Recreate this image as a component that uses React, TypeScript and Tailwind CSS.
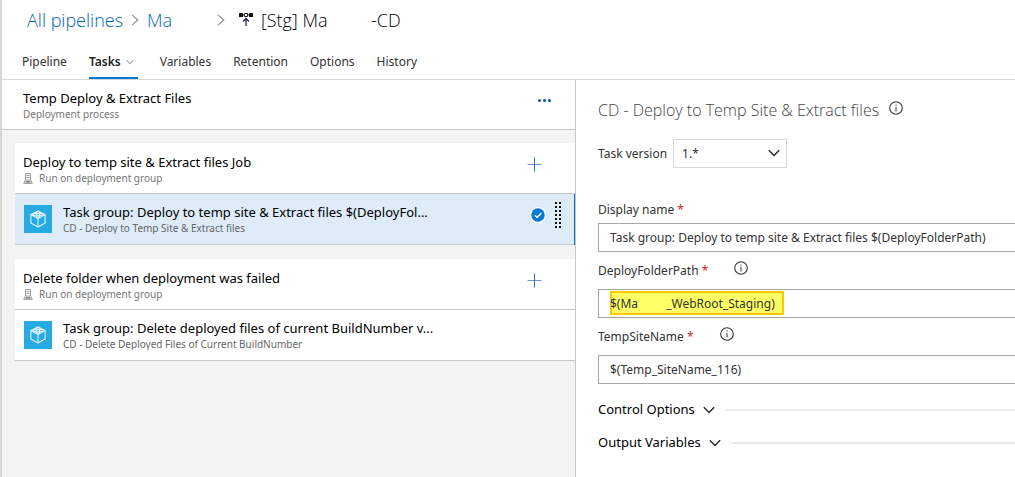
import { useState } from "react";
import type { ReactNode } from "react";

function Chevron({ className }: { className: string }) {
  return (
    <svg viewBox="0 0 12 8" className={className} fill="none" stroke="currentColor" aria-hidden="true">
      <path d="M0.8 1.2 6 6.5 11.2 1.2" strokeWidth="1.3" />
    </svg>
  );
}

function CrumbArrow() {
  return (
    <svg viewBox="0 0 8 12" className="h-3 w-2 shrink-0 text-[#8a8a8a]" fill="none" stroke="currentColor" aria-hidden="true">
      <path d="M1 0.8 6.8 6 1 11.2" strokeWidth="1.1" />
    </svg>
  );
}

function ReleaseIcon() {
  return (
    <svg viewBox="0 0 14 14" className="h-3.5 w-3.5 shrink-0" aria-hidden="true">
      <path d="M0 0h4v4H0zM10 0h4v4h-4z" fill="#111" />
      <path d="M5.500 0.500h3v3h-3z" fill="#fff" stroke="#222" />
      <path d="M4 2h1.500M8.500 2H10" stroke="#222" />
      <path d="M7 13V5.500M4 8.500 7 5.500l3 3" fill="none" stroke="#1b2a44" strokeWidth="1.300" />
    </svg>
  );
}

function InfoButton({ label }: { label: string }) {
  return (
    <button type="button" aria-label={label} className="h-3.5 w-3.5 shrink-0 text-[#333]">
      <svg viewBox="0 0 14 14" className="h-3.5 w-3.5" fill="none" stroke="currentColor" aria-hidden="true">
        <circle cx="7" cy="7" r="6.300" strokeWidth="1.100" />
        <path d="M7 6v4.500" />
        <path d="M7 3.500v1.200" />
      </svg>
    </button>
  );
}

function GroupIcon() {
  return (
    <svg viewBox="0 0 10 11" className="h-[11px] w-2.5 shrink-0" fill="none" stroke="#999" aria-hidden="true">
      <path d="M2.500 0.500h5v6.500h-5z" />
      <path d="M3.500 2.500h3M3.500 4.500h3" />
      <path d="M2 7.500 0.700 10.400h8.600L8 7.500" />
      <path d="M2.500 8.800h5" strokeWidth="1.500" stroke="#777" />
    </svg>
  );
}

function CubeTile() {
  return (
    <span className="flex h-7 w-7 shrink-0 items-center justify-center bg-[#27a9e1]">
      <svg viewBox="0 0 18 20" className="h-[18px] w-4" fill="none" stroke="#e6f6fd" strokeWidth="1.200" strokeLinejoin="round" aria-hidden="true">
        <path d="M9 1 17 5v9.500L9 19 1 14.500V5z" />
        <path d="M1 5l8 4.500L17 5M9 9.500V19" />
        <ellipse cx="9" cy="3" rx="2" ry="1.100" />
        <ellipse cx="5.500" cy="4.900" rx="1.900" ry="1.100" />
        <ellipse cx="12.500" cy="4.900" rx="1.900" ry="1.100" />
        <ellipse cx="9" cy="6.800" rx="1.900" ry="1.100" />
      </svg>
    </span>
  );
}

function JobRow({ title }: { title: string }) {
  return (
    <div className="flex h-[51px] items-center border-b border-[#c8c8c8] bg-white pr-8 pl-2">
      <div className="min-w-0 flex-1">
        <h3 className="truncate text-[13px] leading-5 text-black">{title}</h3>
        <p className="flex items-center gap-1.5 text-[10px] leading-3 text-[#767676]">
          <GroupIcon />
          Run on deployment group
        </p>
      </div>
      <button type="button" aria-label={`Add a task to ${title}`} className="mr-px mb-2 flex h-6 w-4 items-center justify-center text-[#2b6cc4]">
        <svg viewBox="0 0 15 15" className="h-[15px] w-[15px] shrink-0" stroke="currentColor" aria-hidden="true">
          <path d="M7.500 0.500v14" />
          <path d="M0.500 7.500h14" strokeOpacity="0.700" />
        </svg>
      </button>
    </div>
  );
}

function TaskRow({ title, detail, selected = false }: { title: string; detail: string; selected?: boolean }) {
  return (
    <div className={selected ? "border-r border-[#0f6cbd]" : ""}>
      <div
        className={
          selected
            ? "flex h-[51px] items-center border-b border-[#c8c8c8] bg-[#deecf9] pr-3 pl-[9px]"
            : "flex h-[51px] items-center border-b border-[#c8c8c8] bg-white pr-3 pl-[9px]"
        }
      >
        <CubeTile />
        <div className="ml-[11px] min-w-0 flex-1 pb-0.5">
          <h4 className="truncate text-[13px] leading-5 text-black">{title}</h4>
          <p className="truncate text-[10px] leading-3 text-[#666]">{detail}</p>
        </div>
        {selected && (
          <div className="mb-2 flex items-center gap-2">
            <svg viewBox="0 0 16 16" className="h-4 w-4" aria-hidden="true">
              <circle cx="8" cy="8" r="8" fill="#fff" />
              <circle cx="8" cy="8" r="6.700" fill="#0078d4" />
              <path d="M4.800 8.200 7.100 10.400 11.300 6" fill="none" stroke="#fff" strokeWidth="1.500" />
            </svg>
            <svg viewBox="0 0 8 26" className="h-[26px] w-2" aria-hidden="true">
              <path d="M2 0v26M6 0v26" stroke="#111" strokeWidth="2" strokeDasharray="2 2" />
            </svg>
          </div>
        )}
      </div>
    </div>
  );
}

function FieldLabel({ htmlFor, children }: { htmlFor: string; children: ReactNode }) {
  return (
    <label htmlFor={htmlFor} className="text-[12px] leading-5 text-[#333]">
      {children} <span className="text-[#c4262e]">*</span>
    </label>
  );
}

const inputClass =
  "relative block h-[29px] w-full border border-r-0 border-[#a6a6a6] bg-transparent pl-[11px] text-[12px] text-[#333] outline-none focus:border-[#0078d4]";

function Section({ title }: { title: string }) {
  return (
    <button type="button" className="flex h-[33px] w-full items-center text-left text-[13px] text-black">
      {title}
      <Chevron className="mr-2.5 ml-2 h-2 w-3 shrink-0 text-[#222]" />
      <span className="h-0.5 flex-1 bg-[#eaeaea]" />
    </button>
  );
}

const tabs = ["Pipeline", "Tasks", "Variables", "Retention", "Options", "History"];

export default function App() {
  const [active, setActive] = useState("Tasks");
  const [displayName, setDisplayName] = useState("Task group: Deploy to temp site & Extract files $(DeployFolderPath)");
  const [folder, setFolder] = useState("$(Ma         _WebRoot_Staging)");
  const [site, setSite] = useState("$(Temp_SiteName_116)");

  return (
    <div className="flex min-h-screen flex-col border-l-2 border-[#d6d6d6] bg-white font-['Noto_Sans','Open_Sans',sans-serif] text-[#333]">
      <header className="border-b border-[#d6d6d6]">
        <nav aria-label="Breadcrumb" className="flex h-10 items-center pl-[25px] font-['Open_Sans','Noto_Sans',sans-serif] text-[18px] font-light whitespace-pre">
          <a href="#pipelines" className="text-[#0067b5]">All pipelines</a>
          <span className="mx-2 flex"><CrumbArrow /></span>
          <a href="#project" className="w-[70px] text-[#0067b5]">Ma</a>
          <CrumbArrow />
          <span className="mr-2 ml-3.5 flex"><ReleaseIcon /></span>
          <h1 className="flex text-black">
            <span className="w-[110px]">[Stg] Ma</span>
            <span>-CD</span>
          </h1>
        </nav>
        <nav aria-label="Pipeline sections" className="flex h-[39px] gap-[22px] pl-5 text-[12px]">
          {tabs.map((tab) => (
            <button
              key={tab}
              type="button"
              onClick={() => setActive(tab)}
              className={
                tab === active
                  ? "flex items-center gap-1 border-b-2 border-[#0078d4] pt-1.5 font-semibold text-[#222]"
                  : "flex items-center gap-1 border-b-2 border-transparent pt-1.5 text-[#333]"
              }
            >
              {tab}
              {tab === "Tasks" && <Chevron className="mr-1 ml-px h-1.5 w-2 text-[#666]" />}
            </button>
          ))}
        </nav>
      </header>

      <div className="grid flex-1 grid-cols-[minmax(0,574fr)_minmax(0,439fr)]">
        <section className="border-r border-[#c8c8c8] bg-[#f3f3f3]">
          <div className="flex h-[50px] items-center border-b border-[#c8c8c8] bg-white pr-6 pb-0.5 pl-[21px]">
            <div className="min-w-0 flex-1">
              <h2 className="truncate text-[13px] leading-5 text-black">Temp Deploy &amp; Extract Files</h2>
              <p className="text-[10px] leading-3 text-[#767676]">Deployment process</p>
            </div>
            <button type="button" aria-label="More actions" className="mb-1.5 text-[#005a9e]">
              <svg viewBox="0 0 13 3" className="h-[3px] w-[13px]" fill="currentColor" aria-hidden="true">
                <circle cx="1.500" cy="1.500" r="1.500" />
                <circle cx="6.500" cy="1.500" r="1.500" />
                <circle cx="11.500" cy="1.500" r="1.500" />
              </svg>
            </button>
          </div>
          <div className="flex flex-col gap-3.5 pt-[13px] pb-4 pl-[13px]">
            <div>
              <JobRow title="Deploy to temp site & Extract files Job" />
              <TaskRow selected title="Task group: Deploy to temp site & Extract files $(DeployFol..." detail="CD - Deploy to Temp Site & Extract files" />
            </div>
            <div>
              <JobRow title="Delete folder when deployment was failed" />
              <TaskRow title="Task group: Delete deployed files of current BuildNumber v..." detail="CD - Delete Deployed Files of Current BuildNumber" />
            </div>
          </div>
        </section>

        <main className="pt-5 pl-[22px]">
          <div className="flex items-center gap-2.5">
            <h2 className="font-['Open_Sans','Noto_Sans',sans-serif] text-[16px] leading-5 font-light text-[#444]">CD - Deploy to Temp Site &amp; Extract files</h2>
            <span className="mb-1 flex"><InfoButton label="About this task group" /></span>
          </div>

          <div className="mt-[19px] flex items-center gap-1.5">
            <label htmlFor="version" className="text-[12px]">Task version</label>
            <div className="relative">
              <select id="version" className="block h-[29px] w-[114px] appearance-none border border-[#d6d6d6] bg-white pl-2 text-[12px] text-[#333]">
                <option>1.*</option>
              </select>
              <Chevron className="pointer-events-none absolute top-2.5 right-[7px] h-2 w-3 text-[#222]" />
            </div>
          </div>

          <div className="mt-8">
            <div className="flex h-[23px] items-start">
              <FieldLabel htmlFor="display-name">Display name</FieldLabel>
            </div>
            <input id="display-name" className={inputClass} value={displayName} onChange={(e) => setDisplayName(e.target.value)} />
          </div>

          <div className="mt-[9px]">
            <div className="flex h-7 items-start gap-[26px]">
              <FieldLabel htmlFor="folder-path">DeployFolderPath</FieldLabel>
              <InfoButton label="About DeployFolderPath" />
            </div>
            <div className="relative">
              <span className="absolute top-0.5 left-3 h-6 w-[174px] border-2 border-[#ffc800] bg-[#ffff66]" />
              <input id="folder-path" className={inputClass} value={folder} onChange={(e) => setFolder(e.target.value)} />
            </div>
          </div>

          <div className="mt-[9px]">
            <div className="flex h-7 items-start gap-[26px]">
              <FieldLabel htmlFor="site-name">TempSiteName</FieldLabel>
              <InfoButton label="About TempSiteName" />
            </div>
            <input id="site-name" className={inputClass} value={site} onChange={(e) => setSite(e.target.value)} />
          </div>

          <div className="mt-[9px]">
            <Section title="Control Options" />
            <Section title="Output Variables" />
          </div>
        </main>
      </div>
    </div>
  );
}
